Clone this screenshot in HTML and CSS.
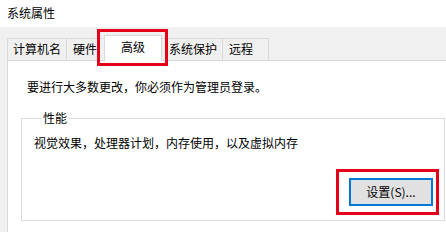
FILE: index.html
```html
<!DOCTYPE html>
<html lang="zh-CN">
<head>
<meta charset="utf-8">
<title>系统属性</title>
<link rel="stylesheet" href="styles.css">
</head>
<body>
<div class="window">
  <div class="title">系统属性</div>
  <div class="dialog">
    <div class="tabs">
      <div class="tab tab-1">计算机名</div>
      <div class="tab tab-2">硬件</div>
      <div class="tab tab-active">高级</div>
      <div class="tab tab-4">系统保护</div>
      <div class="tab tab-5">远程</div>
    </div>
    <div class="panel">
      <p class="message">要进行大多数更改，你必须作为管理员登录。</p>
      <fieldset class="group">
        <legend class="group-title">性能</legend>
        <p class="group-text">视觉效果，处理器计划，内存使用，以及虚拟内存</p>
        <div class="actions">
          <span class="highlight"><button class="btn" type="button">设置(S)...</button></span>
        </div>
      </fieldset>
    </div>
  </div>
</div>
</body>
</html>
```

FILE: styles.css
```css
html, body {
  margin: 0;
  padding: 0;
  background: #ffffff;
}
body {
  width: 446px;
  height: 232px;
  overflow: hidden;
  font-family: "Noto Sans CJK SC", "Noto Sans", sans-serif;
  font-size: 12px;
  color: #000;
}
.window {
  display: flex;
  flex-direction: column;
  height: 232px;
}
.title {
  height: 27px;
  line-height: 25px;
  padding-left: 7px;
  background: #ffffff;
}
.dialog {
  flex: 1;
  background: #f0f0f0;
  padding: 8px 0 0 7px;
  overflow: hidden;
}
.tabs {
  display: flex;
  align-items: flex-end;
}
.tab {
  height: 22px;
  box-sizing: border-box;
  line-height: 20px;
  border: 1px solid #d9d9d9;
  border-bottom: none;
  background: #f0f0f0;
  padding: 0 6px;
  margin-left: -1px;
  white-space: nowrap;
}
.tab-1 {
  margin-left: 0;
  padding: 0 5px;
}
.tab-2 {
  padding: 0 7px 0 6px;
}
.tab-active {
  position: relative;
  z-index: 2;
  height: 26px;
  line-height: 22px;
  padding: 0 16px 3px 16px;
  margin-bottom: -1px;
  background: #ffffff;
}
.tab-active::after {
  content: "";
  position: absolute;
  left: -8px;
  right: -7px;
  top: -7px;
  bottom: -5px;
  border: 3px solid #e5001a;
}
.tab-4 {
  padding: 0 5px 0 7px;
}
.tab-5 {
  padding: 0 15px 0 6px;
}
.panel {
  width: 470px;
  height: 200px;
  background: #ffffff;
  border: 1px solid #d9d9d9;
  padding: 18px 0 0 13px;
}
.message {
  margin: 0 0 15px 6px;
  line-height: 16px;
}
.group {
  width: 424px;
  box-sizing: border-box;
  margin: 0;
  padding: 9px 5px 5px 12px;
  border: 1px solid #dcdcdc;
}
.group-title {
  margin-left: 7px;
  padding: 0 2px;
  line-height: 16px;
}
.group-text {
  margin: 0;
  line-height: 16px;
}
.actions {
  display: flex;
  justify-content: flex-end;
  margin-top: 18px;
}
.highlight {
  display: block;
  border: 3px solid #e5001a;
  padding: 6px 3px 6px 10px;
}
.btn {
  display: block;
  width: 84px;
  height: 28px;
  margin: 0;
  padding: 0;
  border: 2px solid #0078d7;
  background: #e1e1e1;
  font-family: "Noto Sans CJK SC", "Noto Sans", sans-serif;
  font-size: 12px;
  color: #000;
  line-height: 22px;
}
```
